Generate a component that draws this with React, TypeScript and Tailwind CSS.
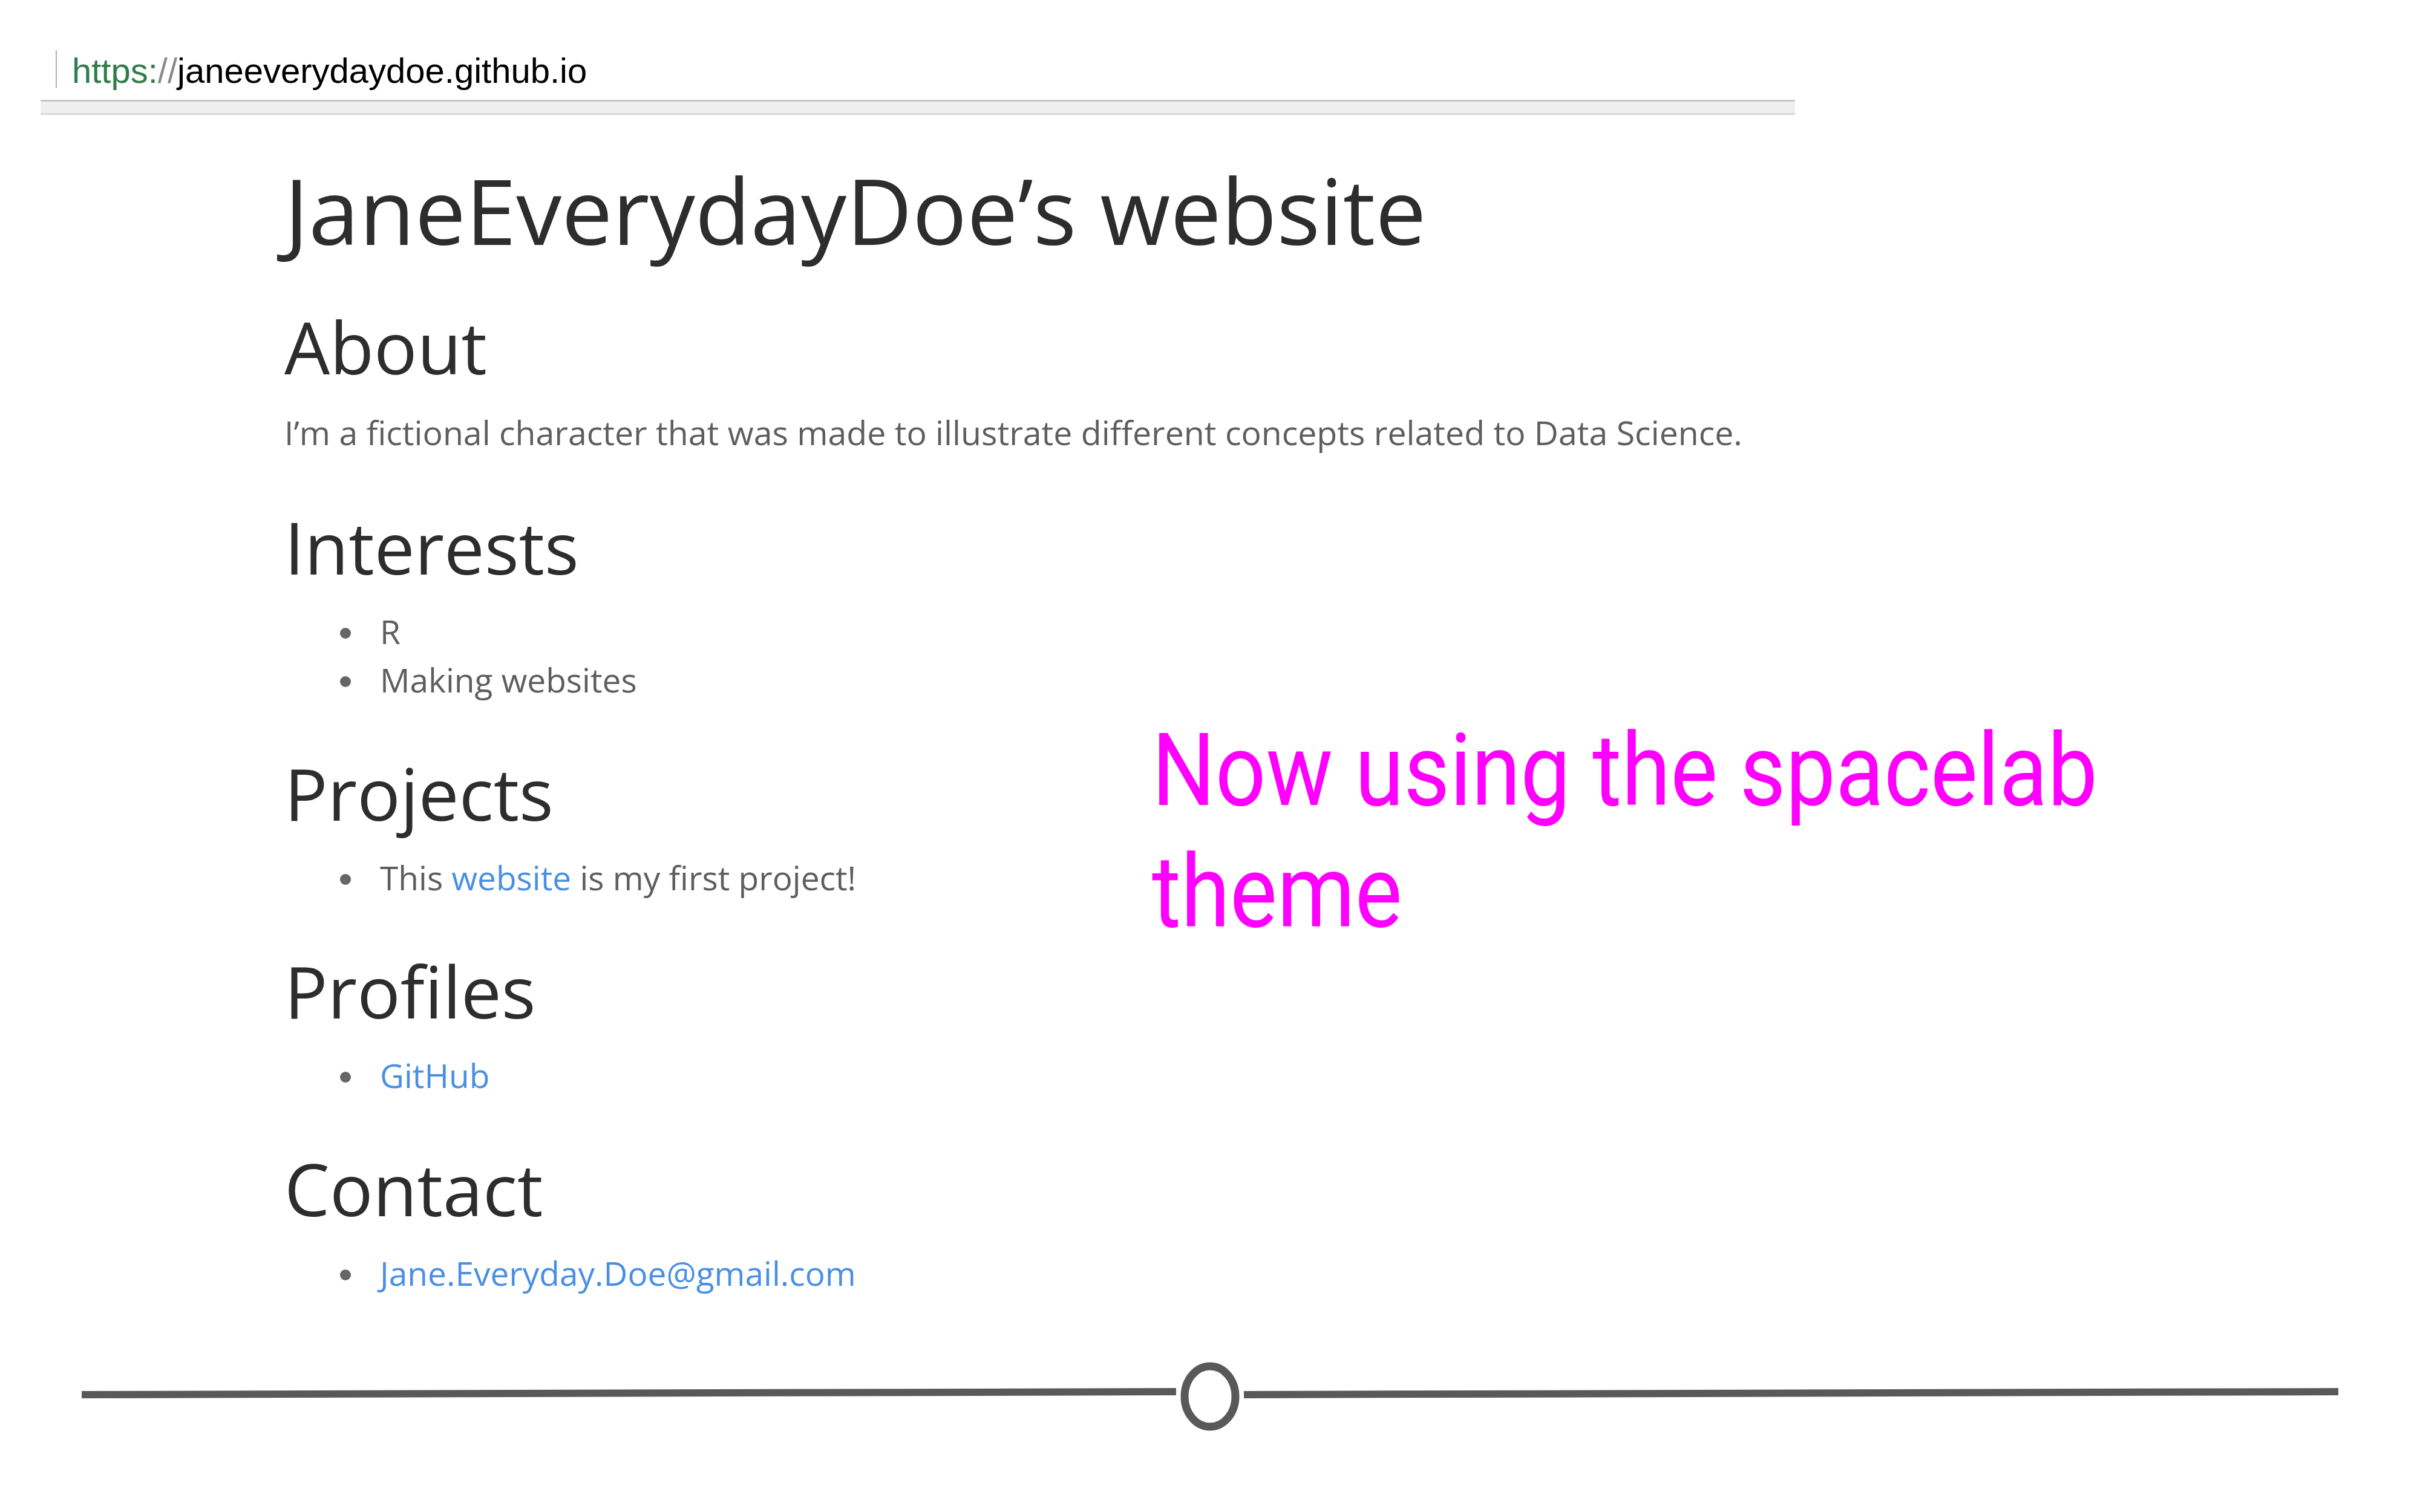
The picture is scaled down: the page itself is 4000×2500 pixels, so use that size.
import React from "react";

const items = {
  interests: ["R", "Making websites"],
};

function Bullet({ children }: { children: React.ReactNode }) {
  return (
    <li className="flex items-start">
      <span className="mt-[34px] ml-[92px] h-[18px] w-[18px] shrink-0 rounded-full bg-[#666]" />
      <span className="ml-[48px]">{children}</span>
    </li>
  );
}

function Heading({ children, className = "" }: { children: React.ReactNode; className?: string }) {
  return <h2 className={`text-[119px] leading-[140px] font-normal text-[#2d2d2d] ${className}`}>{children}</h2>;
}

export default function App() {
  return (
    <div className="relative h-[2500px] w-[4000px] overflow-hidden bg-white">
      {/* address bar */}
      <div className="flex items-start pt-[83px] pl-[92px] font-['Liberation_Sans',Arial,sans-serif]">
        <div className="h-[62px] w-[2px] bg-[#b0b0b0]" />
        <div className="mt-[3px] ml-[25px] text-[58px] leading-[62px] text-black">
          <span className="text-[#2f7d4a]">https:</span>
          <span className="text-[#8a8a8a]">//</span>
          janeeverydaydoe.github.io
        </div>
      </div>
      <div className="mt-[17px] ml-[67px] h-[25px] w-[2900px] border-t-[3px] border-b-[3px] border-t-[#c8c8c8] border-b-[#d8d8d8] bg-[#efefef]" />

      {/* page */}
      <main className="mt-[72px] pl-[470px] font-['Open_Sans',sans-serif] text-[55px] leading-[80px] text-[#5e5e5e]">
        <h1 className="text-[150px] leading-[170px] font-normal text-[#2d2d2d]">JaneEverydayDoe’s website</h1>

        <Heading className="mt-[71px]">About</Heading>
        <p className="mt-[32px] text-[55.4px]">
          I’m a fictional character that was made to illustrate different concepts related to Data Science.
        </p>

        <Heading className="mt-[79px]">Interests</Heading>
        <ul className="mt-[30px]">
          {items.interests.map((i) => (
            <Bullet key={i}>{i}</Bullet>
          ))}
        </ul>

        <Heading className="mt-[77px]">Projects</Heading>
        <ul className="mt-[30px]">
          <Bullet>
            This <a className="text-[#4a8fe4]">website</a> is my first project!
          </Bullet>
        </ul>

        <Heading className="mt-[77px]">Profiles</Heading>
        <ul className="mt-[30px]">
          <Bullet>
            <a className="text-[#4a8fe4]">GitHub</a>
          </Bullet>
        </ul>

        <Heading className="mt-[77px]">Contact</Heading>
        <ul className="mt-[30px]">
          <Bullet>
            <a className="text-[#4a8fe4]">Jane.Everyday.Doe@gmail.com</a>
          </Bullet>
        </ul>
      </main>

      {/* slider drawing */}
      <svg className="mt-[53px] block" width="4000" height="200" viewBox="0 0 4000 200">
        <line x1="135" y1="108" x2="1944" y2="103" stroke="#595959" strokeWidth="12" />
        <line x1="2056" y1="108" x2="3865" y2="103" stroke="#595959" strokeWidth="12" />
        <ellipse cx="2000" cy="111" rx="42" ry="50" fill="none" stroke="#595959" strokeWidth="13" />
      </svg>

      {/* annotation */}
      <div className="absolute top-[1174px] left-[1904px] origin-left scale-x-[0.88] font-['Roboto',sans-serif] text-[167px] leading-[201px] text-[#ff00ff] whitespace-nowrap">
        Now using the spacelab
        <br />
        theme
      </div>
    </div>
  );
}
